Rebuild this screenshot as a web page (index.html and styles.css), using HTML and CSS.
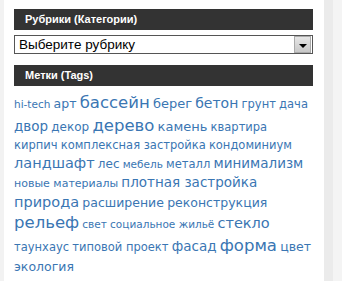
FILE: index.html
```html
<!DOCTYPE html>
<html lang="ru">
<head>
  <meta charset="UTF-8" />
  <title>Сайдбар</title>
  <link rel="stylesheet" href="styles.css">
</head>
<body>
  <div class="page">
    <div class="gutter"></div>
    <div class="sidebar">
      <!-- Рубрики -->
      <div class="widget">
        <h3 class="widget-title">Рубрики (Категории)</h3>
        <div class="select">
          <span class="select-text">Выберите рубрику</span>
          <span class="select-btn"><span class="arrow"></span></span>
        </div>
      </div>

      <!-- Метки -->
      <div class="widget tags-widget">
        <h3 class="widget-title">Метки (Tags)</h3>
        <div class="tagcloud">
          <a style="font-size:10.5px">hi-tech</a> <a style="font-size:12.5px">арт</a> <a style="font-size:16.5px">бассейн</a> <a style="font-size:13px">берег</a> <a style="font-size:14px">бетон</a> <a style="font-size:11.5px">грунт</a> <a style="font-size:11.5px">дача</a>
          <a style="font-size:13.5px">двор</a> <a style="font-size:12px">декор</a> <a style="font-size:16.5px">дерево</a> <a style="font-size:13px">камень</a> <a style="font-size:11.5px">квартира</a>
          <a style="font-size:11.5px">кирпич</a> <a style="font-size:11.5px">комплексная застройка</a> <a style="font-size:11.5px">кондоминиум</a>
          <a style="font-size:14.5px">ландшафт</a> <a style="font-size:12px">лес</a> <a style="font-size:10.5px">мебель</a> <a style="font-size:11.5px">металл</a> <a style="font-size:13.5px">минимализм</a>
          <a style="font-size:11px">новые материалы</a> <a style="font-size:13.5px">плотная застройка</a>
          <a style="font-size:14.5px">природа</a> <a style="font-size:12.5px">расширение</a> <a style="font-size:12.5px">реконструкция</a>
          <a style="font-size:16.5px">рельеф</a> <a style="font-size:10.5px">свет</a> <a style="font-size:10.5px">социальное жильё</a> <a style="font-size:14.5px">стекло</a>
          <a style="font-size:11.5px">таунхаус</a> <a style="font-size:11.5px">типовой проект</a> <a style="font-size:13.5px">фасад</a> <a style="font-size:16.5px">форма</a> <a style="font-size:12.5px">цвет</a>
          <a style="font-size:12.5px">экология</a>
        </div>
      </div>
    </div>
    <div class="stripe"></div>
  </div>
</body>
</html>
```

FILE: styles.css
```css
html, body {
  margin: 0;
  padding: 0;
  background-color: #f4f4f4;
  font-family: "Liberation Sans", Arial, sans-serif;
}
.page {
  display: flex;
  height: 281px;
  overflow: hidden;
}
.gutter {
  width: 4px;
  background-color: #f2f2f2;
}
/* White sidebar column */
.sidebar {
  width: 299px;
  padding: 9px 11px 0 10px;
  background-color: #fff;
}
.stripe {
  width: 9px;
  background-color: #ebebeb;
}
.widget {
  margin-bottom: 11px;
}
.widget-title {
  margin: 0;
  height: 21px;
  line-height: 21px;
  padding-left: 11px;
  background-color: #333;
  color: #fff;
  font-size: 11px;
  font-weight: bold;
}
/* Fake dropdown */
.select {
  display: flex;
  align-items: center;
  margin-top: 5px;
  height: 17px;
  border: 1px solid #555;
  background-color: #fff;
}
.select-text {
  flex: 1;
  padding-left: 4px;
  font-size: 13.5px;
  color: #000;
}
.select-btn {
  display: flex;
  align-items: center;
  justify-content: center;
  width: 15px;
  height: 15px;
  margin-right: 1px;
  border: 1px solid #aaa;
  background: linear-gradient(#e6e6e6, #c8c8c8);
}
.arrow {
  width: 0;
  height: 0;
  margin-top: 2px;
  border-left: 4px solid transparent;
  border-right: 4px solid transparent;
  border-top: 4px solid #000;
}
/* Tag cloud */
.tagcloud {
  padding-top: 6px;
  font-family: "DejaVu Sans", Verdana, sans-serif;
  font-size: 10px;
  line-height: 1.38;
}
.tagcloud a {
  color: #3a76b3;
  text-decoration: none;
}
```
